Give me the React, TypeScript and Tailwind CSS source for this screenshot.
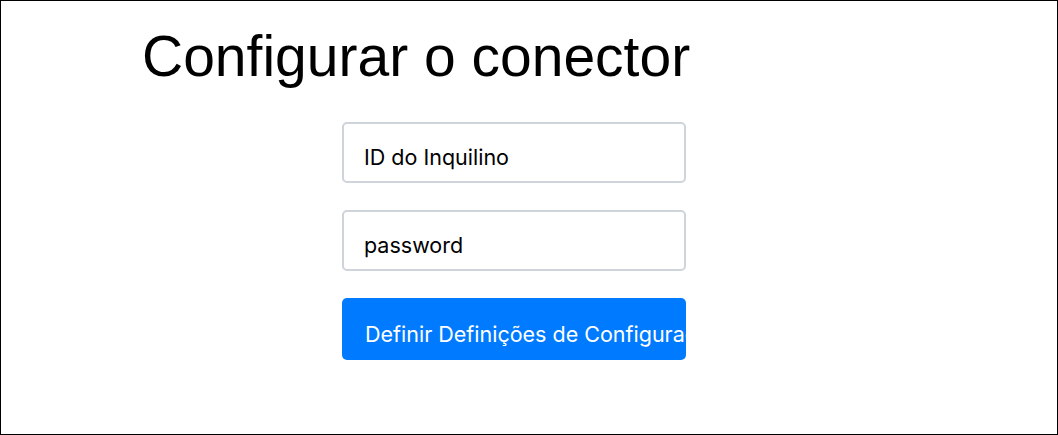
export default function App() {
  return (
    <div className="w-[1058px] h-[435px] border border-black bg-white overflow-hidden">
      <h1 className="ml-[141px] mt-[27px] text-[57px] leading-none text-black font-['Liberation_Sans',Arial,sans-serif] font-normal">
        Configurar o conector
      </h1>
      <form className="ml-[341px] mt-[37px] flex w-[344px] flex-col gap-[27px] font-['Inter',sans-serif]">
        <input
          type="text"
          defaultValue="ID do Inquilino"
          className="h-[61px] w-full rounded-[5px] border-2 border-[#ced4da] bg-white pl-5 pt-[9px] text-[21.5px] text-black outline-none"
        />
        <input
          type="text"
          defaultValue="password"
          className="h-[61px] w-full rounded-[5px] border-2 border-[#ced4da] bg-white pl-5 pt-[9px] text-[21.5px] text-black outline-none"
        />
        <button
          type="button"
          className="h-[62px] w-full overflow-hidden whitespace-nowrap rounded-[5px] bg-[#007bff] pl-[23px] pt-[10px] text-left text-[21.5px] text-white"
        >
          Definir Definições de Configuração
        </button>
      </form>
    </div>
  );
}
